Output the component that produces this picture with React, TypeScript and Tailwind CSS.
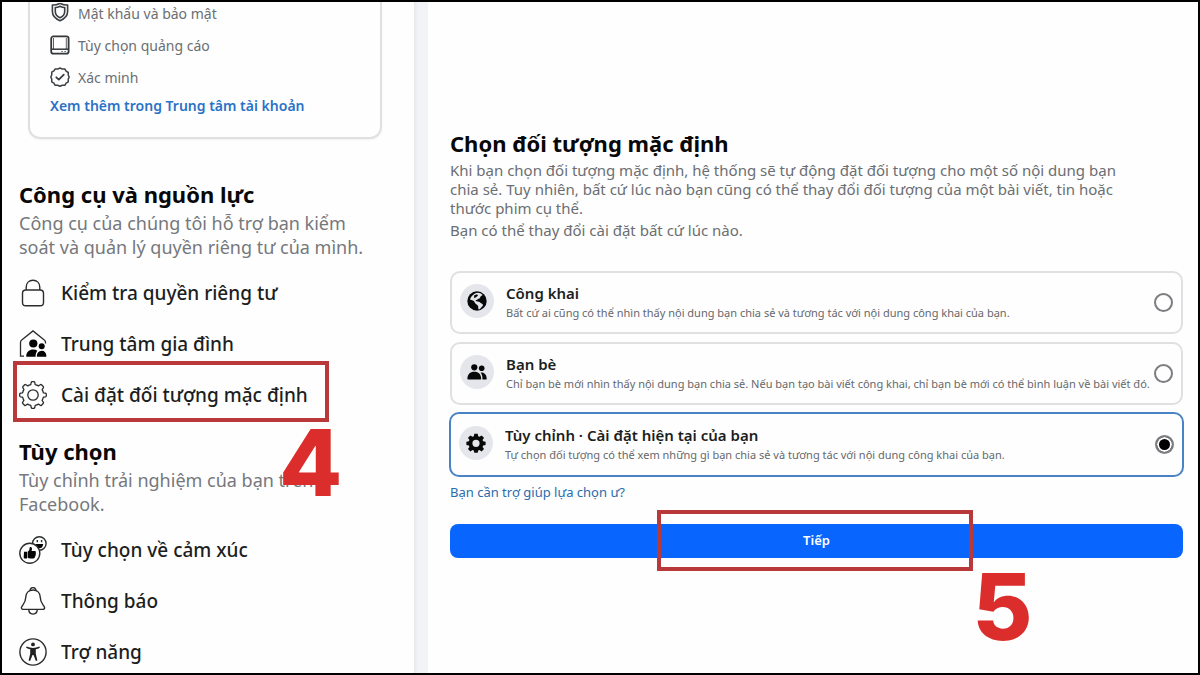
import React, { useState } from "react";

type IconProps = { className?: string };

function ShieldIcon() {
  return (
    <svg viewBox="0 0 20 20" className="size-5 shrink-0" fill="none" stroke="#3c3f42" strokeWidth="1.6" strokeLinejoin="round" aria-hidden="true">
      <path d="M10 .2c2.200 1.300 4.700 1.900 7.600 1.800v6.600c0 4.200-3 7.300-7.600 9.200-4.600-1.900-7.600-5-7.600-9.200V2c2.900.1 5.400-.5 7.600-1.800z" />
      <path d="M10 3.200c1.500.9 3 1.300 4.700 1.300v4.100c0 2.700-1.800 4.900-4.700 6.200-2.900-1.300-4.700-3.500-4.700-6.200V4.500c1.700 0 3.200-.4 4.700-1.300z" />
    </svg>
  );
}

function ScreenIcon() {
  return (
    <svg viewBox="0 0 20 20" className="size-5 shrink-0" fill="none" stroke="#34373a" strokeWidth="1.8" aria-hidden="true">
      <rect x="1.200" y="1.400" width="17.400" height="17.200" rx="2.200" />
      <path d="M2 14.200h16" strokeWidth="1.500" />
      <path d="M3.500 3v11M16.300 3v11" strokeWidth=".8" />
      <path d="M11.500 16.500h1.200M14.500 16.500h1.200" strokeWidth="1.200" />
    </svg>
  );
}

function VerifiedIcon() {
  return (
    <svg viewBox="0 0 20 20" className="size-5 shrink-0" fill="none" stroke="#3c3f42" strokeWidth="1.5" strokeLinecap="round" strokeLinejoin="round" aria-hidden="true">
      <path d="M10 1l2.300 1.100 2.500-.1 1.300 2.200 2.200 1.300-.1 2.500L19.200 10l-1 2.300.1 2.500-2.200 1.300-1.300 2.200-2.500-.1L10 19.200l-2.300-1-2.500.1-1.300-2.200-2.200-1.300.1-2.500L.8 10l1-2.300-.1-2.500 2.200-1.300L5.200 2l2.500.1z" />
      <path d="M6.300 10.300l2.500 2.300 5-5" strokeWidth="1.800" />
    </svg>
  );
}

function LockIcon() {
  return (
    <svg viewBox="0 0 28 28" className="size-7 shrink-0" fill="none" stroke="#2a2c2e" strokeWidth="1.400" aria-hidden="true">
      <rect x="3.500" y="11" width="21" height="15.800" rx="3.400" />
      <path d="M7.200 11V8.200C7.200 4 10 1.200 14 1.200S20.800 4 20.800 8.200V11" />
    </svg>
  );
}

function FamilyIcon() {
  return (
    <svg viewBox="0 0 28 28" className="size-7 shrink-0" fill="none" stroke="#2a2c2e" strokeWidth="1.300" aria-hidden="true">
      <path d="M5 26.200H1.500V12.500c0-1 .4-1.800 1.200-2.400L14 .9l11.300 9.200c.8.600 1.200 1.400 1.200 2.400v1" />
      <g fill="#050505" stroke="none">
        <circle cx="14.300" cy="13.500" r="4.100" />
        <path d="M8 26.800c-.6 0-.9-.4-.8-1 .4-4 3-6.300 7-6.300 1.700 0 3.100.4 4.200 1.200-1.100 1.400-1.700 3-1.800 5 0 .500.100.800.300 1.100z" />
        <circle cx="22.700" cy="16.300" r="3" />
        <path d="M18.500 26.800c-.5 0-.7-.3-.7-.8.200-3.200 1.900-5.300 4.900-5.300 2.900 0 4.500 2 4.700 5.200 0 .6-.2.900-.7.900z" />
      </g>
    </svg>
  );
}

function GearOutlineIcon() {
  return (
    <svg viewBox="0 0 28 28" className="size-7 shrink-0" fill="none" stroke="#2a2c2e" strokeWidth="1.300" strokeLinejoin="round" aria-hidden="true">
      <path d="M11.800 3.600 12.200 1.500Q12.400.7 13.200.7h1.600q.8 0 1 .8l.4 2.100q1.800.4 3.200 1.300l1.800-1.200q.7-.5 1.300.1l1.700 1.700q.6.600.1 1.300l-1.200 1.800q.9 1.400 1.300 3.200l2.100.4q.8.200.8 1v1.600q0 .8-.8 1l-2.100.4q-.4 1.800-1.300 3.200l1.200 1.800q.5.700-.1 1.300l-1.700 1.700q-.6.600-1.300.1l-1.800-1.200q-1.400.9-3.200 1.300l-.4 2.100q-.2.800-1 .8h-1.600q-.8 0-1-.8l-.4-2.100q-1.800-.4-3.200-1.300l-1.800 1.200q-.7.500-1.300-.1l-1.700-1.700q-.6-.6-.1-1.300l1.200-1.800q-.9-1.400-1.300-3.200l-2.100-.4q-.8-.2-.8-1v-1.600q0-.8.8-1l2.100-.4q.4-1.800 1.300-3.200L3.900 6.800q-.5-.7.1-1.300l1.700-1.700q.6-.6 1.300-.1l1.800 1.200q1.300-.9 3-1.300z" />
      <circle cx="14" cy="14" r="5.200" />
    </svg>
  );
}

function ReactionIcon() {
  return (
    <svg viewBox="0 0 28 28" className="size-7 shrink-0" fill="none" stroke="#2a2c2e" strokeWidth="1.400" aria-hidden="true">
      <circle cx="20.300" cy="7.500" r="6.800" />
      <path d="M16.800 8h7.400c-.2 2.800-1.600 4.200-3.700 4.200S17 10.800 16.800 8z" fill="#050505" stroke="none" />
      <path d="M18.300 4v2.200M22.600 4v2.200" />
      <circle cx="10.800" cy="17.300" r="10" fill="#fff" />
      <path d="M5 15.800h3v6.600H5.600c-.6 0-.9-.3-.9-.9zM8.600 15.800c1.500-.9 2-2.300 2-4.100 0-.9 1.900-.8 2.300.5.300 1-.1 2.100-.4 2.900h3.300c1.200 0 1.500 1.200.8 1.900.6.600.5 1.500-.2 1.900.4.700.1 1.500-.6 1.800.2 1-.4 1.700-1.500 1.700h-3.200c-1 0-1.700-.3-2.500-.6z" fill="#050505" stroke="none" />
    </svg>
  );
}

function BellIcon() {
  return (
    <svg viewBox="0 0 28 28" className="size-7 shrink-0" fill="none" stroke="#2a2c2e" strokeWidth="1.400" strokeLinejoin="round" aria-hidden="true">
      <path d="M11.200 3.700c-.2-1.800 1.100-3.100 2.800-3.100s3 1.300 2.800 3.100" />
      <path d="M14 3c4.300 0 7 3 7.200 7 .1 3.400 1 5.600 2.800 7.900 1 1.400 1.600 2.100 1.600 2.900 0 1-.8 1.600-2 1.600H4.400c-1.200 0-2-.6-2-1.600 0-.8.6-1.500 1.600-2.900 1.800-2.300 2.700-4.500 2.800-7.900C7 6 9.700 3 14 3z" />
      <path d="M9.800 22.600c0 2.500 1.600 4.500 4.200 4.500s4.200-2 4.200-4.500" />
    </svg>
  );
}

function AccessibilityIcon() {
  return (
    <svg viewBox="0 0 28 28" className="size-7 shrink-0" fill="none" stroke="#2a2c2e" strokeWidth="1.400" aria-hidden="true">
      <circle cx="14" cy="14" r="13.100" />
      <circle cx="14" cy="6.400" r="1.900" fill="#222" stroke="none" />
      <path d="M7.600 8.600c4.200 1.700 8.600 1.700 12.800 0l.5 1.200c-1.300.7-2.700 1.200-4.100 1.500v4.400l1.600 6.800-1.500.5-2.400-6h-1l-2.400 6-1.500-.5 1.600-6.800v-4.400c-1.400-.3-2.800-.8-4.100-1.500z" fill="#222" stroke="none" />
    </svg>
  );
}

function GlobeIcon() {
  return (
    <svg viewBox="0 0 20 20" className="size-5" aria-hidden="true">
      <circle cx="10" cy="10" r="9.700" fill="#080809" />
      <path d="M10.500 1.700c2.300 0 3.800.8 5 2-.4 1.100-1.500 1.100-2 1.800-.5.900-.2 1.700-1.300 2.100-1.200.4-1.700 1.200-2.900 1.500-.9.200-.8 1.200.1 1.200 1.700 0 3.300.8 4.300 1.600 1.200.9 2.700 1.200 2.200 2.700-.5 1.300-1.800 1.900-2.500 2.900-.5.700-1.300.9-1.900.9-.5-1.900.1-3.100-1-4.200-1.100-1-2.600-1.600-3-3.200C7.100 9.700 5 9.200 3 8.600 3.500 6.500 4.500 5 6 3.900c1.200-1 2.600-2.200 4.500-2.200z" fill="#e4e6eb" />
      <path d="M7 4.600l3-1.300 1 1.300-2 1.600-1.700 1z" fill="#080809" />
    </svg>
  );
}

function FriendsIcon() {
  return (
    <svg viewBox="0 0 20 20" className="size-5" fill="#080809" aria-hidden="true">
      <circle cx="7.300" cy="5.300" r="3.100" />
      <path d="M.4 16.500c.2-4 2.600-6.700 6.900-6.700s6.700 2.700 6.900 6.700c0 .8-.3 1.100-1 1.100H1.400c-.7 0-1-.3-1-1.100z" />
      <circle cx="14.700" cy="6.300" r="2.800" />
      <path d="M13.600 10.500c3.600-.5 5.900 2 6.100 5.900 0 .8-.3 1.200-1 1.200h-3.300c.3-2.900-.4-5.300-1.800-7.100z" />
    </svg>
  );
}

function GearSolidIcon() {
  return (
    <svg viewBox="0 0 20 20" className="size-5" aria-hidden="true">
      <path
        fillRule="evenodd"
        fill="#080809"
        d="M8.300.8h3.400l.5 2.500 1.300.5 2.100-1.400L18 4.800l-1.400 2.100.5 1.300 2.500.5v3.400l-2.500.5-.5 1.300L18 16l-2.400 2.400-2.100-1.400-1.300.5-.5 2.300H8.300l-.5-2.300-1.300-.5-2.100 1.400L2 16l1.400-2.100-.5-1.300-2.500-.5V8.700l2.500-.5.5-1.300L2 4.800l2.400-2.400 2.100 1.400 1.300-.5zM10 6.700a3.600 3.600 0 1 0 0 7.200 3.600 3.600 0 0 0 0-7.200z"
      />
    </svg>
  );
}

type NavItem = { label: string; Icon: (p: IconProps) => React.ReactElement; step?: string };

const accountLinks: NavItem[] = [
  { label: "Mật khẩu và bảo mật", Icon: ShieldIcon },
  { label: "Tùy chọn quảng cáo", Icon: ScreenIcon },
  { label: "Xác minh", Icon: VerifiedIcon },
];

const toolLinks: NavItem[] = [
  { label: "Kiểm tra quyền riêng tư", Icon: LockIcon },
  { label: "Trung tâm gia đình", Icon: FamilyIcon },
  { label: "Cài đặt đối tượng mặc định", Icon: GearOutlineIcon, step: "4" },
];

const preferenceLinks: NavItem[] = [
  { label: "Tùy chọn về cảm xúc", Icon: ReactionIcon },
  { label: "Thông báo", Icon: BellIcon },
  { label: "Trợ năng", Icon: AccessibilityIcon },
];

const audiences = [
  {
    id: "public",
    title: "Công khai",
    detail: "Bất cứ ai cũng có thể nhìn thấy nội dung bạn chia sẻ và tương tác với nội dung công khai của bạn.",
    Icon: GlobeIcon,
  },
  {
    id: "friends",
    title: "Bạn bè",
    detail: "Chỉ bạn bè mới nhìn thấy nội dung bạn chia sẻ. Nếu bạn tạo bài viết công khai, chỉ bạn bè mới có thể bình luận về bài viết đó.",
    Icon: FriendsIcon,
  },
  {
    id: "custom",
    title: "Tùy chỉnh · Cài đặt hiện tại của bạn",
    detail: "Tự chọn đối tượng có thể xem những gì bạn chia sẻ và tương tác với nội dung công khai của bạn.",
    Icon: GearSolidIcon,
  },
];

function NavSection({ title, text, items }: { title: string; text: string; items: NavItem[] }) {
  return (
    <section className="pr-8 pl-[17px]">
      <h2 className="text-[22px] leading-7 font-bold text-[#080809]">{title}</h2>
      <p className="mt-[3px] text-[18px] leading-6 text-[#75787c]">{text}</p>
      <ul className="mt-4 flex flex-col gap-[15px]">
        {items.map(({ label, Icon, step }) => (
          <li key={label} className="relative">
            <a href="#" className="flex h-9 items-center gap-[14px] text-[19px] font-medium whitespace-nowrap text-[#1c1e21]">
              <Icon />
              {label}
            </a>
            {step && (
              <div className="pointer-events-none absolute -top-4 -bottom-[9px] -left-[6px] z-10 w-[316px] border-4 border-[#b9393a]">
                <span className="absolute top-full left-[262px] font-[Inter,sans-serif] text-[92px] leading-[90px] font-extrabold text-[#db2d2b]">
                  {step}
                </span>
              </div>
            )}
          </li>
        ))}
      </ul>
    </section>
  );
}

export default function App() {
  const [selected, setSelected] = useState("custom");

  return (
    <div className="flex min-h-screen overflow-hidden border-2 border-black bg-[#fefefe] font-['Noto_Sans','Open_Sans',sans-serif]">
      <aside className="w-[412px] shrink-0">
        <div className="mr-8 ml-[26px] rounded-b-xl border-x-2 border-b-2 border-[#dfe0e2] px-5 pb-[21px] shadow-xs">
          <ul className="flex flex-col gap-[10px]">
            {accountLinks.map(({ label, Icon }) => (
              <li key={label}>
                <a href="#" className="flex h-[22px] items-center gap-2 text-[14px] text-[#6b6e72]">
                  <Icon />
                  {label}
                </a>
              </li>
            ))}
          </ul>
          <a href="#" className="mt-2 block text-[14px] leading-5 font-semibold text-[#2a72c6]">
            Xem thêm trong Trung tâm tài khoản
          </a>
        </div>
        <div className="mt-[41px] flex flex-col gap-6">
          <NavSection
            title="Công cụ và nguồn lực"
            text="Công cụ của chúng tôi hỗ trợ bạn kiểm soát và quản lý quyền riêng tư của mình."
            items={toolLinks}
          />
          <NavSection title="Tùy chọn" text="Tùy chỉnh trải nghiệm của bạn trên Facebook." items={preferenceLinks} />
        </div>
      </aside>

      <div className="w-[14px] shrink-0 bg-linear-to-r from-[#e6e8ec] to-[#f2f3f7] to-30%" />

      <main className="min-w-0 flex-1 pt-[127px] pr-[15px] pl-[22px]">
        <h1 className="text-[22px] leading-7 font-bold text-[#080809]">Chọn đối tượng mặc định</h1>
        <div className="mt-1 flex max-w-[690px] flex-col gap-[3px] text-[15px] leading-[19px] text-[#6b6e72]">
          <p>
            Khi bạn chọn đối tượng mặc định, hệ thống sẽ tự động đặt đối tượng cho một số nội dung bạn chia sẻ. Tuy nhiên,
            bất cứ lúc nào bạn cũng có thể thay đổi đối tượng của một bài viết, tin hoặc thước phim cụ thể.
          </p>
          <p>Bạn có thể thay đổi cài đặt bất cứ lúc nào.</p>
        </div>

        <div role="radiogroup" aria-label="Chọn đối tượng mặc định" className="mt-[31px] flex flex-col gap-2">
          {audiences.map(({ id, title, detail, Icon }) => (
            <label
              key={id}
              className="flex h-[63px] items-center gap-3 rounded-[10px] border-2 border-[#dfe0e2] px-2 has-checked:-m-px has-checked:h-[65px] has-checked:border-[#4a83c4]"
            >
              <span className="mb-1 flex size-[34px] shrink-0 items-center justify-center rounded-full bg-[#e4e6eb]">
                <Icon />
              </span>
              <span className="flex min-w-0 flex-1 flex-col">
                <span className="text-[15px] leading-5 font-semibold text-[#1c1e21]">{title}</span>
                <span className="text-[11px] leading-5 whitespace-nowrap text-[#65686c]">{detail}</span>
              </span>
              <input
                type="radio"
                name="audience"
                checked={selected === id}
                onChange={() => setSelected(id)}
                className="size-[19px] shrink-0 appearance-none rounded-full border-2 border-[#7b7d80] checked:bg-black checked:shadow-[inset_0_0_0_2px_white]"
              />
            </label>
          ))}
        </div>

        <a href="#" className="mt-[6px] block text-[13px] leading-5 text-[#2a6cab]">
          Bạn cần trợ giúp lựa chọn ư?
        </a>

        <div className="relative mt-[22px]">
          <button type="button" className="block h-[34px] w-full rounded-lg bg-[#0866ff] text-[13px] font-semibold text-white">
            Tiếp
          </button>
          <div className="pointer-events-none absolute -top-[14px] -bottom-[13px] left-1/2 -ml-[160px] w-[316px] border-4 border-[#b9393a]">
            <span className="absolute top-full left-[312px] font-[Inter,sans-serif] text-[92px] leading-[80px] font-extrabold text-[#db2d2b]">
              5
            </span>
          </div>
        </div>
      </main>
    </div>
  );
}
